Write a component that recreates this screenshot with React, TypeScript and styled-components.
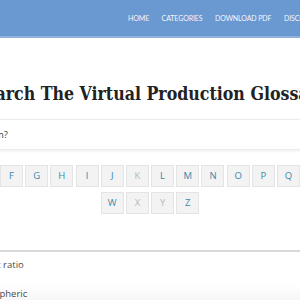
import styled, { createGlobalStyle } from "styled-components";

const GlobalStyle = createGlobalStyle`
  html, body {
    margin: 0;
    padding: 0;
    background: #ffffff;
    overflow: hidden;
  }
  body {
    width: 300px;
    height: 300px;
    font-family: "Open Sans", "Noto Sans", sans-serif;
  }
`;

const Header = styled.header`
  height: 36px;
  background-color: #6a98d1;
  border-bottom: 2px solid #8fb2de;
  display: flex;
  align-items: center;
  padding-left: 128px;
`;

const Nav = styled.nav`
  display: flex;
  gap: 12.5px;
  flex-shrink: 0;
`;

const NavLink = styled.a`
  font-family: Lato, "Open Sans", sans-serif;
  font-size: 7px;
  color: #f4f7fc;
  text-transform: uppercase;
  white-space: nowrap;
  letter-spacing: -0.1px;
  text-decoration: none;
  cursor: pointer;
`;

const Main = styled.main`
  display: flex;
  flex-direction: column;
  align-items: center;
`;

const Title = styled.h1`
  flex-shrink: 0;
  white-space: nowrap;
  margin: 44px 0 0;
  font-family: "DejaVu Serif", "Liberation Serif", serif;
  font-stretch: condensed;
  font-weight: 700;
  font-size: 17.6px;
  line-height: 24px;
  color: #222222;
`;

const SearchInput = styled.input`
  flex-shrink: 0;
  box-sizing: border-box;
  width: 560px;
  height: 31px;
  margin-top: 13px;
  padding: 0 6px;
  border: 1px solid #ececec;
  box-shadow: 0 1px 3px rgba(0, 0, 0, 0.08);
  font-family: "Open Sans", sans-serif;
  font-size: 9.5px;
  color: #333;
  outline: none;

  &::placeholder {
    color: #3a3a3a;
  }
`;

const Letters = styled.div`
  flex-shrink: 0;
  width: 560px;
  margin-top: 15px;
  display: flex;
  flex-wrap: wrap;
  justify-content: center;
  column-gap: 2.2px;
  row-gap: 5.5px;
`;

const LetterButton = styled.button<{ $disabled?: boolean }>`
  box-sizing: border-box;
  width: 23px;
  height: 21.5px;
  padding: 0;
  background: #f3f3f3;
  border: 1px solid #e4e4e4;
  font-family: "Open Sans", sans-serif;
  font-size: 9.5px;
  color: ${(p) => (p.$disabled ? "#b8b8b8" : "#3a88ab")};
  cursor: ${(p) => (p.$disabled ? "default" : "pointer")};
`;

const Results = styled.section`
  flex-shrink: 0;
  width: 560px;
  margin-top: 36px;
  border-top: 2px solid #d9d9d9;
  display: flex;
  flex-direction: column;
  align-items: center;
`;

const Entry = styled.div<{ $shaded?: boolean }>`
  box-sizing: border-box;
  width: 358px;
  height: 33px;
  display: flex;
  align-items: center;
  font-family: "Open Sans", sans-serif;
  font-size: 9.5px;
  color: #4a4a4a;
  background: ${(p) =>
    p.$shaded ? "linear-gradient(#ffffff 20%, #f2f2f2 100%)" : "transparent"};

  &:first-child {
    height: 25px;
  }
`;

const navItems = ["Home", "Categories", "Download PDF", "Disclaimer"];
const disabled = ["K", "X", "Y"];
const alphabet = "ABCDEFGHIJKLMNOPQRSTUVWXYZ".split("");

export default function App() {
  return (
    <>
      <GlobalStyle />
      <Header>
        <Nav>
          {navItems.map((item) => (
            <NavLink key={item}>{item}</NavLink>
          ))}
        </Nav>
      </Header>
      <Main>
        <Title>Search The Virtual Production Glossary</Title>
        <SearchInput placeholder="Looking for a particular term?" />
        <Letters>
          {alphabet.map((l) => (
            <LetterButton key={l} $disabled={disabled.includes(l)}>
              {l}
            </LetterButton>
          ))}
        </Letters>
        <Results>
          <Entry>Aspect ratio</Entry>
          <Entry $shaded>Atmospheric</Entry>
        </Results>
      </Main>
    </>
  );
}
